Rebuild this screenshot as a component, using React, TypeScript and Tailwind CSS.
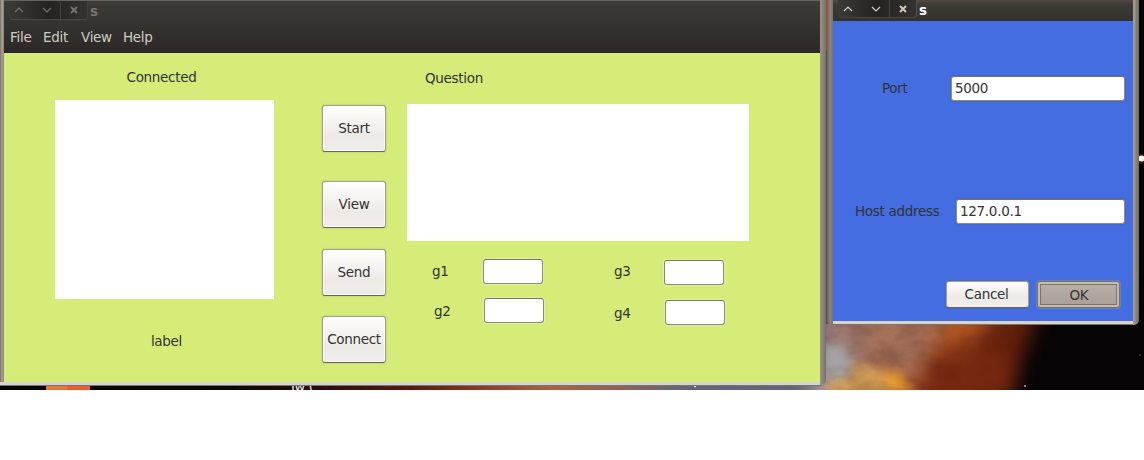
import React from 'react';

const up = 'M1 6 L5 2 L9 6';
const down = 'M1 2 L5 6 L9 2';

function TitleBar({ active }: { active: boolean }) {
  const stroke = active ? '#d0ccc2' : '#77736a';
  return (
    <div className={active ? 'flex h-[21px] items-start bg-gradient-to-b from-[#55493f] via-[#3d3c36] via-20% to-[#32312d]' : 'flex h-[21px] items-start'}>
      <div
        className={
          active
            ? 'ml-[5px] flex h-[18px] w-[79px] items-center rounded-b border-r border-b border-r-[#504f49] border-b-[#45443f] bg-gradient-to-r from-[#3b3a35] via-[#242321] to-[#33322e]'
            : 'mt-px ml-[5px] flex h-[19px] w-[79px] items-center rounded-b border-r border-b border-r-[#403f3b] border-b-[#4a4944] bg-gradient-to-r from-[#3b3a35] via-[#242321] to-[#33322e]'
        }
      >
        <svg width="10" height="8" className="ml-[5px]" fill="none" stroke={stroke} strokeWidth="1.2"><path d={up} /></svg>
        <svg width="10" height="8" className="ml-[18px]" fill="none" stroke={stroke} strokeWidth="1.2"><path d={down} /></svg>
        <div className="ml-[8px] h-[17px] w-px bg-[#45443f]" />
        <svg width="8" height="8" className="ml-[8.5px]" fill="none" stroke={stroke} strokeWidth="1.9"><path d="M1 1 L7 7 M7 1 L1 7" /></svg>
      </div>
      <span className={active ? 'ml-[2px] text-[13.5px] leading-[21px] font-bold text-white' : 'ml-[2px] text-[13.5px] leading-[23px] font-bold text-[#77736a]'}>s</span>
    </div>
  );
}

function SideButton({ children, className }: { children: string; className: string }) {
  return (
    <button
      className={`h-[47px] w-16 shrink-0 rounded-[3px] border border-[#a39d92] border-b-[#68645c] bg-gradient-to-b from-white via-[#edeae6] via-65% to-[#efecea] pb-[2px] text-center leading-[16px] whitespace-nowrap shadow-[0_0_1px_1px_rgba(190,200,120,0.45),inset_0_0_0_1px_rgba(255,255,255,0.7)] ${className}`}
    >
      {children}
    </button>
  );
}

function SmallField() {
  return <div className="h-[25px] w-[60px] shrink-0 rounded-[3px] border border-[#8d887b] border-t-[#77736a] bg-white shadow-[0_0_1px_1px_rgba(238,243,190,0.6)]" />;
}

function Wallpaper() {
  return (
    <svg className="block" width="1144" height="390">
      <defs>
        <linearGradient id="strip">
          <stop offset="0" stopColor="#060505" />
          <stop offset="0.2" stopColor="#090606" />
          <stop offset="0.28" stopColor="#2a0d0a" />
          <stop offset="0.36" stopColor="#57190f" />
          <stop offset="0.42" stopColor="#8a3c23" />
          <stop offset="0.48" stopColor="#a96344" />
          <stop offset="0.54" stopColor="#926052" />
          <stop offset="0.6" stopColor="#646379" />
          <stop offset="0.7" stopColor="#60647c" />
          <stop offset="0.73" stopColor="#856c70" />
          <stop offset="0.76" stopColor="#a77454" />
          <stop offset="0.8" stopColor="#9a3f19" />
          <stop offset="0.85" stopColor="#6d230e" />
          <stop offset="0.9" stopColor="#2a0c07" />
          <stop offset="0.935" stopColor="#070405" />
          <stop offset="1" stopColor="#060405" />
        </linearGradient>
        <linearGradient id="fade">
          <stop offset="0" stopColor="#fff" />
          <stop offset="0.5" stopColor="#fff" />
          <stop offset="1" stopColor="#000" />
        </linearGradient>
        <mask id="dustMask"><rect x="826" y="324" width="210" height="66" fill="url(#fade)" /></mask>
        <filter id="soft" x="-50%" y="-50%" width="200%" height="200%" colorInterpolationFilters="sRGB"><feGaussianBlur stdDeviation="10" /></filter>
        <filter id="glow" x="-50%" y="-50%" width="200%" height="200%" colorInterpolationFilters="sRGB"><feGaussianBlur stdDeviation="5" /></filter>
        <filter id="dust" x="0" y="0" width="100%" height="100%" colorInterpolationFilters="sRGB">
          <feTurbulence type="fractalNoise" baseFrequency="0.04 0.06" numOctaves="4" seed="5" />
          <feColorMatrix values="0 0 0 0 0.2  0 0 0 0 0.05  0 0 0 0 0.04  1.5 0 0 0 -0.5" />
        </filter>
      </defs>
      <rect width="1144" height="390" fill="url(#strip)" />
      <g filter="url(#soft)">
        <path d="M815 310 H960 L930 350 L915 385 L850 350Z" fill="#a5725a" />
        <path d="M820 330 L850 350 L875 400 H810Z" fill="#a79b98" />
        <path d="M825 318 L860 318 L870 345 L835 350Z" fill="#9b7770" />
        <path d="M945 308 L1005 308 L970 345 L935 355Z" fill="#b35722" />
        <path d="M935 355 L985 335 L1020 345 L1010 400 H920Z" fill="#782a11" />
        <path d="M1000 308 H1040 L1020 360 L980 350Z" fill="#64200c" />
        <path d="M1045 300 H1160 V410 H1010 L1025 355Z" fill="#060405" />
      </g>
      <g filter="url(#glow)">
        <path d="M827 384 L860 362 L885 372 L910 383 L917 395 H825Z" fill="#d09a57" />
        <ellipse cx="892" cy="379" rx="12" ry="7" fill="#e89c31" />
        <ellipse cx="901" cy="386" rx="8" ry="4" fill="#f39a20" />
        <path d="M823 345 L843 349 L852 376 L828 382Z" fill="#a4a2a6" />
      </g>
      <g mask="url(#dustMask)">
        <rect x="826" y="324" width="210" height="66" filter="url(#dust)" opacity="0.25" />
      </g>
      <path d="M825 0 H829 V324 H825Z" fill="#55515e" />
      <path d="M824 0 H830 L828 5 L827 50 H826 L825 5Z" fill="#b3472d" />
      <circle cx="1025" cy="386" r="1" fill="#aaa1ac" />
      <circle cx="1140" cy="355" r="1" fill="#51323b" />
      <circle cx="1141" cy="159" r="5" fill="#7a291d" opacity="0.5" />
      <circle cx="1141.5" cy="158.5" r="3" fill="#fff7ee" />
      <circle cx="695" cy="386.5" r="1" fill="#ffe0d0" />
      <path d="M46 380 H90 V390 H46Z" fill="#ea5e29" />
      <path d="M46 380 H67 V390 H46Z" fill="#e37837" />
      <text x="289" y="391" fontSize="13" fill="#f4f0fa">Tw (</text>
    </svg>
  );
}

export default function App() {
  return (
    <div className="h-[460px] w-[1144px] overflow-hidden bg-white font-['DejaVu_Sans',sans-serif] text-[13.5px] leading-[16px] tracking-[-0.3px] text-[#333]">
      <div className="relative h-[390px] w-full overflow-hidden">
        <Wallpaper />

        <section className="absolute top-0 left-0 flex h-[386px] w-[826px] flex-col overflow-hidden rounded-br-[5px] border-b border-[#77756c] bg-[#d7d4d0]">
          <div className="flex h-[382px] shrink-0">
            <div className="w-1 shrink-0 bg-gradient-to-r from-[#777167] via-[#aaa295] to-[#8c857a]" />
            <div className="flex w-[816px] flex-col">
              <header className="h-[53px] shrink-0 border-t border-[#65645e] bg-gradient-to-b from-[#3d3c37] to-[#2b2827]">
                <div className="-mt-px"><TitleBar active={false} /></div>
                <nav className="flex pt-[8px] pl-[6px] text-[#cfccc2]">
                  <span className="w-[33px]">File</span>
                  <span className="w-[38px]">Edit</span>
                  <span className="w-[42px]">View</span>
                  <span>Help</span>
                </nav>
              </header>
              <main className="flex flex-1 bg-[#d5ec78] pl-[51px]">
                <div className="flex w-[219px] flex-col items-center">
                  <span className="mt-[16px] mr-[6px]">Connected</span>
                  <div className="mt-[15px] h-[199px] w-full shrink-0 bg-white" />
                  <span className="mt-[34px] ml-[4px]">label</span>
                </div>
                <div className="ml-[48px] flex w-16 flex-col">
                  <SideButton className="mt-[52px]">Start</SideButton>
                  <SideButton className="mt-[29px]">View</SideButton>
                  <SideButton className="mt-[21px]">Send</SideButton>
                  <SideButton className="mt-[20px]">Connect</SideButton>
                </div>
                <div className="ml-[21px] flex w-[342px] flex-col">
                  <span className="mt-[17px] ml-[18px]">Question</span>
                  <div className="mt-[18px] h-[137px] shrink-0 bg-white" />
                  <div className="flex">
                    <div className="flex w-[207px] flex-col">
                      <div className="mt-[18px] flex items-center"><span className="ml-[25px] w-[51px] pb-px">g1</span><SmallField /></div>
                      <div className="mt-[14px] flex items-center"><span className="ml-[27px] w-[50px]">g2</span><SmallField /></div>
                    </div>
                    <div className="flex flex-col">
                      <div className="mt-[19px] flex items-center"><span className="w-[50px] pb-[3px]">g3</span><SmallField /></div>
                      <div className="mt-[15px] flex items-center"><span className="w-[51px] pt-px">g4</span><SmallField /></div>
                    </div>
                  </div>
                </div>
              </main>
            </div>
            <div className="h-[386px] w-[6px] shrink-0 bg-gradient-to-r from-[#99958a] via-[#8c8376] to-[#777065]" />
          </div>
        </section>

        <section className="absolute top-0 left-[827px] flex h-[325px] w-[312px] overflow-hidden rounded-b-[5px]">
          <div className="w-[6px] shrink-0 bg-gradient-to-r from-[#69645b] via-[#8c867c] to-[#777166]" />
          <div className="flex w-[300px] flex-col border-b border-[#77756c] bg-[#d7d4d0]">
            <TitleBar active />
            <main className="flex h-[300px] shrink-0 flex-col bg-[#436de0]">
              <label className="mt-[55px] flex h-[25px] items-center pl-[49px]">
                <span className="w-[69px] pb-[2px]">Port</span>
                <span className="flex h-[25px] w-[174px] items-center rounded-[3px] border border-[#918b80] border-t-[#77736b] bg-white pb-[2px] pl-[3px] shadow-[0_0_1px_1px_rgba(75,103,188,0.7)]">5000</span>
              </label>
              <label className="mt-[98px] flex h-[25px] items-center pl-[22px]">
                <span className="w-[101px] pb-[2px]">Host address</span>
                <span className="flex h-[25px] w-[169px] items-center rounded-[3px] border border-[#918b80] border-t-[#77736b] bg-white pb-[2px] pl-[3px] shadow-[0_0_1px_1px_rgba(75,103,188,0.7)]">127.0.0.1</span>
              </label>
              <div className="mt-[57px] flex gap-[8px] pl-[113px]">
                <button className="h-[27px] w-[83px] rounded-[3px] border border-[#a39d92] border-b-[#68645c] bg-gradient-to-b from-white via-[#edeae6] via-60% to-[#efecea] pr-[2px] pb-[2px] shadow-[0_0_1px_1px_rgba(75,103,188,0.7)]">Cancel</button>
                <button className="h-[27px] w-[83px] rounded-[3px] border border-[#777065] bg-[#c4bcad] p-[2px] shadow-[0_0_1px_1px_rgba(130,140,170,0.6)]">
                  <span className="flex h-[21px] items-center justify-center border border-[#817367] bg-gradient-to-b from-[#b7afa5] to-[#aaa298] pl-px">OK</span>
                </button>
              </div>
            </main>
          </div>
          <div className="w-[6px] shrink-0 bg-gradient-to-r from-[#aaa398] via-[#8c867c] to-[#706b63]" />
        </section>
      </div>
    </div>
  );
}
